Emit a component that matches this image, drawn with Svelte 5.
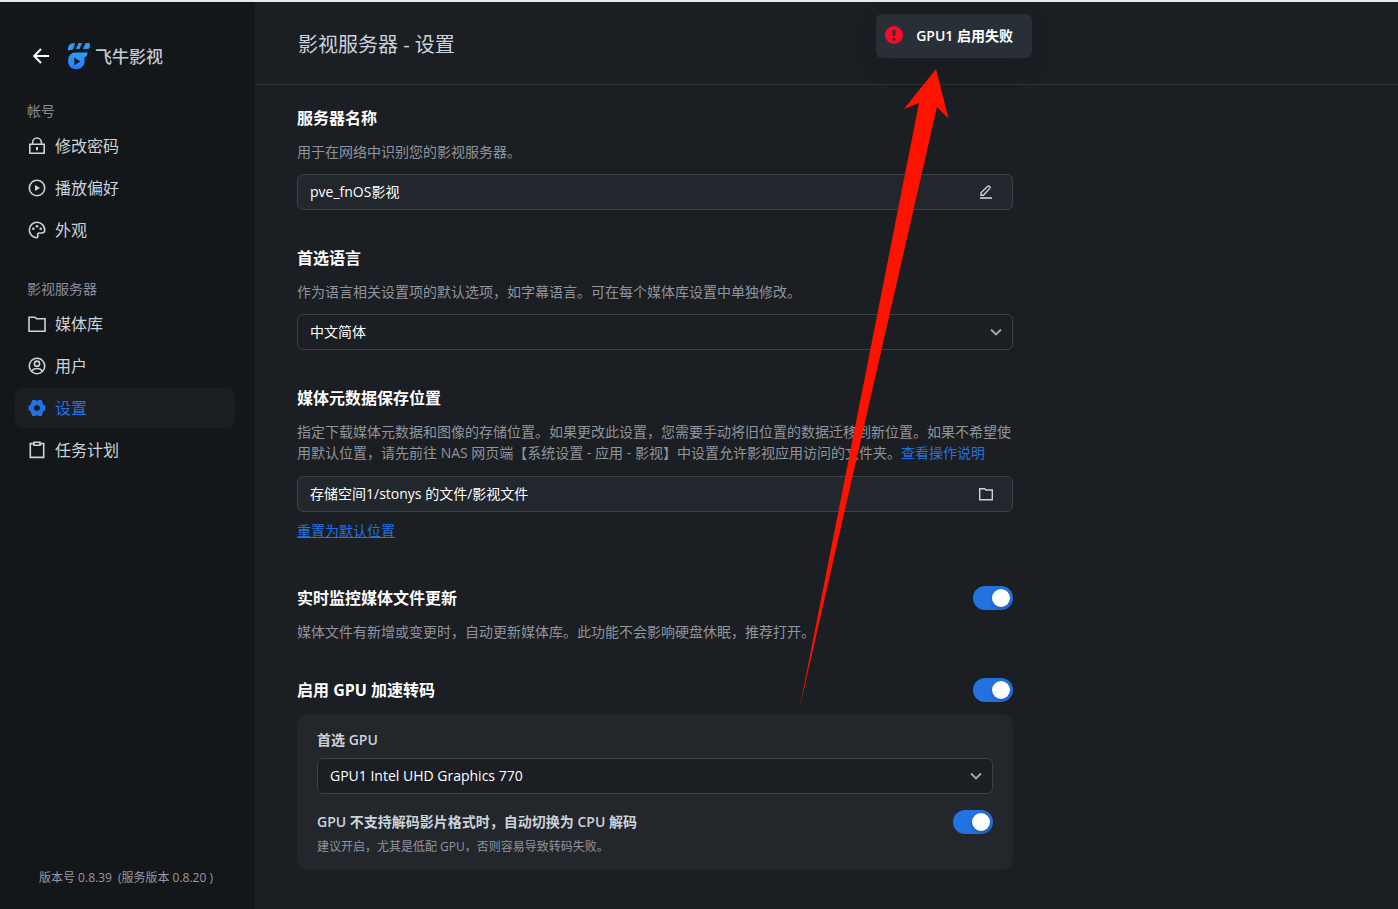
<script>
  const groups = [
    {
      label: '帐号',
      items: [
        { icon: 'lock', text: '修改密码' },
        { icon: 'play', text: '播放偏好' },
        { icon: 'palette', text: '外观' }
      ]
    },
    {
      label: '影视服务器',
      items: [
        { icon: 'folder', text: '媒体库' },
        { icon: 'user', text: '用户' },
        { icon: 'gear', text: '设置', active: true },
        { icon: 'clipboard', text: '任务计划' }
      ]
    }
  ];

  let serverName = $state('pve_fnOS影视');
  let language = $state('中文简体');
  let path = $state('存储空间1/stonys 的文件/影视文件');
  let gpu = $state('GPU1 Intel UHD Graphics 770');
  let watchFiles = $state(true);
  let gpuEnabled = $state(true);
  let cpuFallback = $state(true);
</script>

{#snippet icon(name)}
  <svg class="icon" viewBox="0 0 20 20" fill="none" stroke="currentColor" stroke-width="1.6" aria-hidden="true">
    {#if name === 'lock'}
      <path d="M2.8 8.3h14.4v9H2.8zM5.6 8.3V6.4a4.4 4.4 0 0 1 8.800 0v1.900" />
      <path d="M10 11v3.300" stroke-width="2" />
    {:else if name === 'play'}
      <circle cx="10" cy="10" r="7.700" />
      <path d="M8 6.900l5 3.100-5 3.100z" fill="currentColor" stroke="none" />
    {:else if name === 'palette'}
      <path d="M9.600 17.700A7.700 7.700 0 1 1 17.700 10c0 1.900-1.300 3-3 3h-2.200c-1.500 0-2.200 1-1.800 2.200.3 1.100.2 2.400-1.100 2.500z" />
      <g fill="currentColor" stroke="none">
        <circle cx="6.300" cy="8.800" r="1.300" />
        <circle cx="10" cy="6.300" r="1.300" />
        <circle cx="13.700" cy="8.800" r="1.300" />
      </g>
    {:else if name === 'folder'}
      <path d="M2 3.200h6l1.600 1.600H18v12.400H2z" />
    {:else if name === 'user'}
      <circle cx="10" cy="10" r="7.700" />
      <circle cx="10" cy="7.700" r="2.600" />
      <path d="M4.500 15.200c1.300-1.900 3.200-2.700 5.500-2.700s4.200.8 5.500 2.700" />
    {:else if name === 'gear'}
      <path
        fill="currentColor"
        stroke-width="1.400"
        stroke-linejoin="round"
        fill-rule="evenodd"
        d="M5.700 2.800L8.300 2.800Q10 4 11.700 2.800L14.300 2.800L15.300 6.500L17.800 8.400V11.600L15.300 13.500L14.300 17.200H11.700Q10 16 8.300 17.200H5.700L4.700 13.500L2.200 11.600V8.400L4.700 6.500ZM10 6.300A3.700 3.700 0 1 0 10 13.700A3.700 3.700 0 1 0 10 6.300Z"
      />
    {:else if name === 'clipboard'}
      <path d="M7 3.600H3.300v13.800h13.400V3.600H13M7 2.300h6v2.900H7z" />
    {/if}
  </svg>
{/snippet}

{#snippet chevron()}
  <svg class="chevron" viewBox="0 0 12 12" fill="none" stroke="currentColor" stroke-width="1.800" aria-hidden="true">
    <path d="M1 3.500l5 5 5-5" />
  </svg>
{/snippet}

<div class="app">
  <aside>
    <div class="brand">
      <button class="back" aria-label="返回">
        <svg viewBox="0 0 18 16" fill="none" stroke="currentColor" stroke-width="2" aria-hidden="true">
          <path d="M9 1L2.200 8l6.800 7M2.500 8H17" />
        </svg>
      </button>
      <svg class="logo" viewBox="0 0 24 28" aria-hidden="true">
        <defs>
          <linearGradient id="blue" x1="0" y1="0" x2="0" y2="1">
            <stop offset="0" stop-color="#2aa0ff" />
            <stop offset="1" stop-color="#2a78ff" />
          </linearGradient>
        </defs>
        <g fill="#2a9bff">
          <path d="M1 8.500V6.200Q1.500 1 8 1L6 7.500Z" />
          <path d="M11.600 1H15L12.500 7H9Z" />
          <path d="M18.500 1H21.500Q22.900 1 22.900 2.400V5Q22.600 7 20.500 7H16Z" />
        </g>
        <path
          fill="url(#blue)"
          fill-rule="evenodd"
          d="M5.500 11Q7 10.500 10 10.500H20.700Q20.200 14.500 17.700 15.300L17.200 15.800Q18.600 21 16 24Q13 27.300 9 27.300Q1 26.500 1 19Q1 13.500 5.500 11ZM7.300 15.500V23.300L13.200 19.400Z"
        />
      </svg>
      <span class="brand-name">飞牛影视</span>
    </div>

    <nav>
      {#each groups as group}
        <section class="group">
          <h2>{group.label}</h2>
          <ul>
            {#each group.items as item}
              <li>
                <a href="#{item.icon}" class:active={item.active} aria-current={item.active ? 'page' : undefined}>
                  {@render icon(item.icon)}
                  {item.text}
                </a>
              </li>
            {/each}
          </ul>
        </section>
      {/each}
    </nav>

    <footer><span>版本号 0.8.39</span><span>(服务版本 0.8.20 )</span></footer>
  </aside>

  <main>
    <header><h1>影视服务器 - 设置</h1></header>

    <div class="content">
      <section>
        <h3><label for="server-name">服务器名称</label></h3>
        <p>用于在网络中识别您的影视服务器。</p>
        <div class="field filled">
          <input id="server-name" type="text" bind:value={serverName} />
          <button aria-label="编辑">
            <svg viewBox="0 0 16 16" fill="none" stroke="currentColor" stroke-width="1.400" aria-hidden="true">
              <path d="M3 11.300V8.700L9.700 2.300Q10.700 1.500 11.700 2.400Q12.600 3.400 11.700 4.400L5.500 11.300Z" />
              <path d="M2 14h12" stroke-width="1.600" />
            </svg>
          </button>
        </div>
      </section>

      <section>
        <h3><label for="language">首选语言</label></h3>
        <p>作为语言相关设置项的默认选项，如字幕语言。可在每个媒体库设置中单独修改。</p>
        <div class="field">
          <select id="language" bind:value={language}>
            <option>中文简体</option>
          </select>
          {@render chevron()}
        </div>
      </section>

      <section>
        <h3><label for="path">媒体元数据保存位置</label></h3>
        <p>
          指定下载媒体元数据和图像的存储位置。如果更改此设置，您需要手动将旧位置的数据迁移到新位置。如果不希望使用默认位置，请先前往 NAS 网页端【系统设置 - 应用 - 影视】中设置允许影视应用访问的文件夹。<a
            href="#help">查看操作说明</a>
        </p>
        <div class="field filled">
          <input id="path" type="text" bind:value={path} />
          <button aria-label="选择文件夹">
            <svg viewBox="0 0 16 16" fill="none" stroke="currentColor" stroke-width="1.400" aria-hidden="true">
              <path d="M1.700 2.700h5l1.200 1.300h6.400v9.700H1.700z" />
            </svg>
          </button>
        </div>
        <a class="reset" href="#reset">重置为默认位置</a>
      </section>

      <section>
        <div class="row">
          <h3><label for="watch">实时监控媒体文件更新</label></h3>
          <input id="watch" class="switch" type="checkbox" role="switch" bind:checked={watchFiles} />
        </div>
        <p>媒体文件有新增或变更时，自动更新媒体库。此功能不会影响硬盘休眠，推荐打开。</p>
      </section>

      <section>
        <div class="row">
          <h3><label for="gpu-on">启用 GPU 加速转码</label></h3>
          <input id="gpu-on" class="switch" type="checkbox" role="switch" bind:checked={gpuEnabled} />
        </div>
        <div class="card">
          <label class="sub" for="gpu">首选 GPU</label>
          <div class="field dark">
            <select id="gpu" bind:value={gpu}>
              <option>GPU1 Intel UHD Graphics 770</option>
            </select>
            {@render chevron()}
          </div>
          <div class="row">
            <label class="sub" for="fallback">GPU 不支持解码影片格式时，自动切换为 CPU 解码</label>
            <input id="fallback" class="switch" type="checkbox" role="switch" bind:checked={cpuFallback} />
          </div>
          <p class="note">建议开启，尤其是低配 GPU，否则容易导致转码失败。</p>
        </div>
      </section>
    </div>
  </main>

  <div class="toast" role="alert">
    <svg viewBox="0 0 18 18" aria-hidden="true">
      <circle cx="9" cy="9" r="9" fill="#fb0a2a" />
      <path d="M7.400 4h3.200l-.5 6H7.900z" fill="#292f36" />
      <circle cx="9" cy="13.200" r="1.500" fill="#292f36" />
    </svg>
    GPU1 启用失败
  </div>

  <svg class="arrow" viewBox="0 0 152 644" aria-hidden="true">
    <path fill="#ff1200" d="M138 1L150.500 50.500L139 39L1 643L121 35L106 41Z" />
  </svg>
</div>

<style>
  :global(body) {
    background: #1b1e22;
  }

  .app {
    position: relative;
    box-sizing: border-box;
    display: flex;
    min-height: 100vh;
    border-top: 2px solid #e6e8ea;
    background: #1b1e22;
    color: #ccd3dc;
    font: 14px/21px 'Open Sans', 'Noto Sans CJK SC', sans-serif;
    overflow: hidden;
  }

  h1, h2, h3, p, ul {
    margin: 0;
    padding: 0;
    font-weight: 400;
  }

  a {
    color: #2272e3;
    text-decoration: none;
  }

  button {
    display: flex;
    padding: 0;
    border: 0;
    background: none;
    color: inherit;
  }

  aside {
    box-sizing: border-box;
    display: flex;
    flex-direction: column;
    flex: 0 0 255px;
    padding: 38px 20px 21px 15px;
    background: #14171a;
  }

  .brand {
    display: flex;
    align-items: center;
    height: 32px;
    padding-left: 17px;
  }

  .back {
    color: #fff;
  }

  .back svg {
    width: 18px;
    height: 16px;
  }

  .logo {
    width: 24px;
    height: 28px;
    margin: 0 4px 0 17px;
  }

  .brand-name {
    color: #c3cad6;
    font-size: 17px;
    font-weight: 500;
  }

  .group {
    padding-top: 28px;
  }

  h2 {
    padding: 0 12px 4px;
    color: #868d97;
    font-size: 14px;
    line-height: 22px;
  }

  ul {
    display: grid;
    gap: 2px;
    list-style: none;
  }

  nav a {
    display: flex;
    align-items: center;
    gap: 8px;
    height: 40px;
    padding: 0 12px;
    border-radius: 8px;
    color: #ccd3dc;
    font-size: 16px;
  }

  nav a.active {
    background: #1b1e23;
    color: #2272e3;
  }

  .icon {
    width: 20px;
    height: 20px;
  }

  footer {
    display: flex;
    gap: 6px;
    margin-top: auto;
    padding-left: 24px;
    color: #939aa4;
    font-size: 12px;
    white-space: nowrap;
  }

  main {
    flex: 1;
    min-width: 0;
  }

  header {
    padding: 28px 43px 24px;
    border-bottom: 1px solid #2d3136;
  }

  h1 {
    color: #ccd3dc;
    font-size: 20px;
    line-height: 30px;
  }

  .content {
    display: grid;
    gap: 36px;
    max-width: 716px;
    padding: 21px 42px 38px;
  }

  h3 {
    color: #fff;
    font-size: 16px;
    font-weight: 700;
    line-height: 24px;
  }

  p {
    margin-top: 11px;
    color: #8e959f;
  }

  p a {
    line-height: 22px;
  }

  .field {
    position: relative;
    display: flex;
    align-items: center;
    box-sizing: border-box;
    height: 36px;
    margin-top: 12px;
    border: 1px solid #3c4148;
    border-radius: 6px;
  }

  .filled {
    padding-right: 18px;
    background: #22262d;
  }

  .dark {
    background: #1b1e22;
  }

  .field input,
  .field select {
    flex: 1;
    box-sizing: border-box;
    min-width: 0;
    height: 100%;
    padding: 0 12px 2px;
    border: 0;
    outline: 0;
    background: none;
    color: #fff;
    font: inherit;
    appearance: none;
  }

  .field button svg {
    width: 16px;
    height: 16px;
  }

  .chevron {
    position: absolute;
    right: 10px;
    width: 12px;
    height: 12px;
    color: #a4abb5;
    pointer-events: none;
  }

  .reset {
    display: block;
    width: fit-content;
    margin: 8px 0;
    line-height: 22px;
    text-decoration: underline;
  }

  .row {
    display: flex;
    align-items: center;
    justify-content: space-between;
  }

  .switch {
    flex: none;
    width: 40px;
    height: 24px;
    margin: 0;
    padding: 3px;
    box-sizing: border-box;
    border-radius: 12px;
    background: #3c4148;
    appearance: none;
  }

  .switch::before {
    content: '';
    display: block;
    width: 18px;
    height: 18px;
    border-radius: 50%;
    background: #fff;
    box-shadow: 0 2px 4px #0003;
  }

  .switch:checked {
    background: #2272e0;
  }

  .switch:checked::before {
    margin-left: auto;
  }

  .card {
    margin-top: 12px;
    padding: 16px 20px 13px;
    border-radius: 12px;
    background: #23262b;
  }

  .sub {
    display: block;
    font-weight: 600;
    line-height: 20px;
  }

  .card .field {
    margin: 8px 0 16px;
  }

  .note {
    margin-top: 3px;
    font-size: 12px;
    line-height: 20px;
  }

  .toast {
    position: absolute;
    top: 12px;
    right: 366px;
    display: flex;
    align-items: center;
    box-sizing: border-box;
    gap: 13px;
    height: 44px;
    padding: 0 19px 2px 9px;
    border-radius: 6px;
    background: #292f36;
    box-shadow: 0 8px 24px #0002;
    color: #fff;
    font-weight: 600;
    white-space: nowrap;
  }

  .toast svg {
    width: 18px;
    height: 18px;
  }

  .arrow {
    position: absolute;
    top: 66px;
    left: 798px;
    width: 152px;
    height: 644px;
    pointer-events: none;
  }
</style>
